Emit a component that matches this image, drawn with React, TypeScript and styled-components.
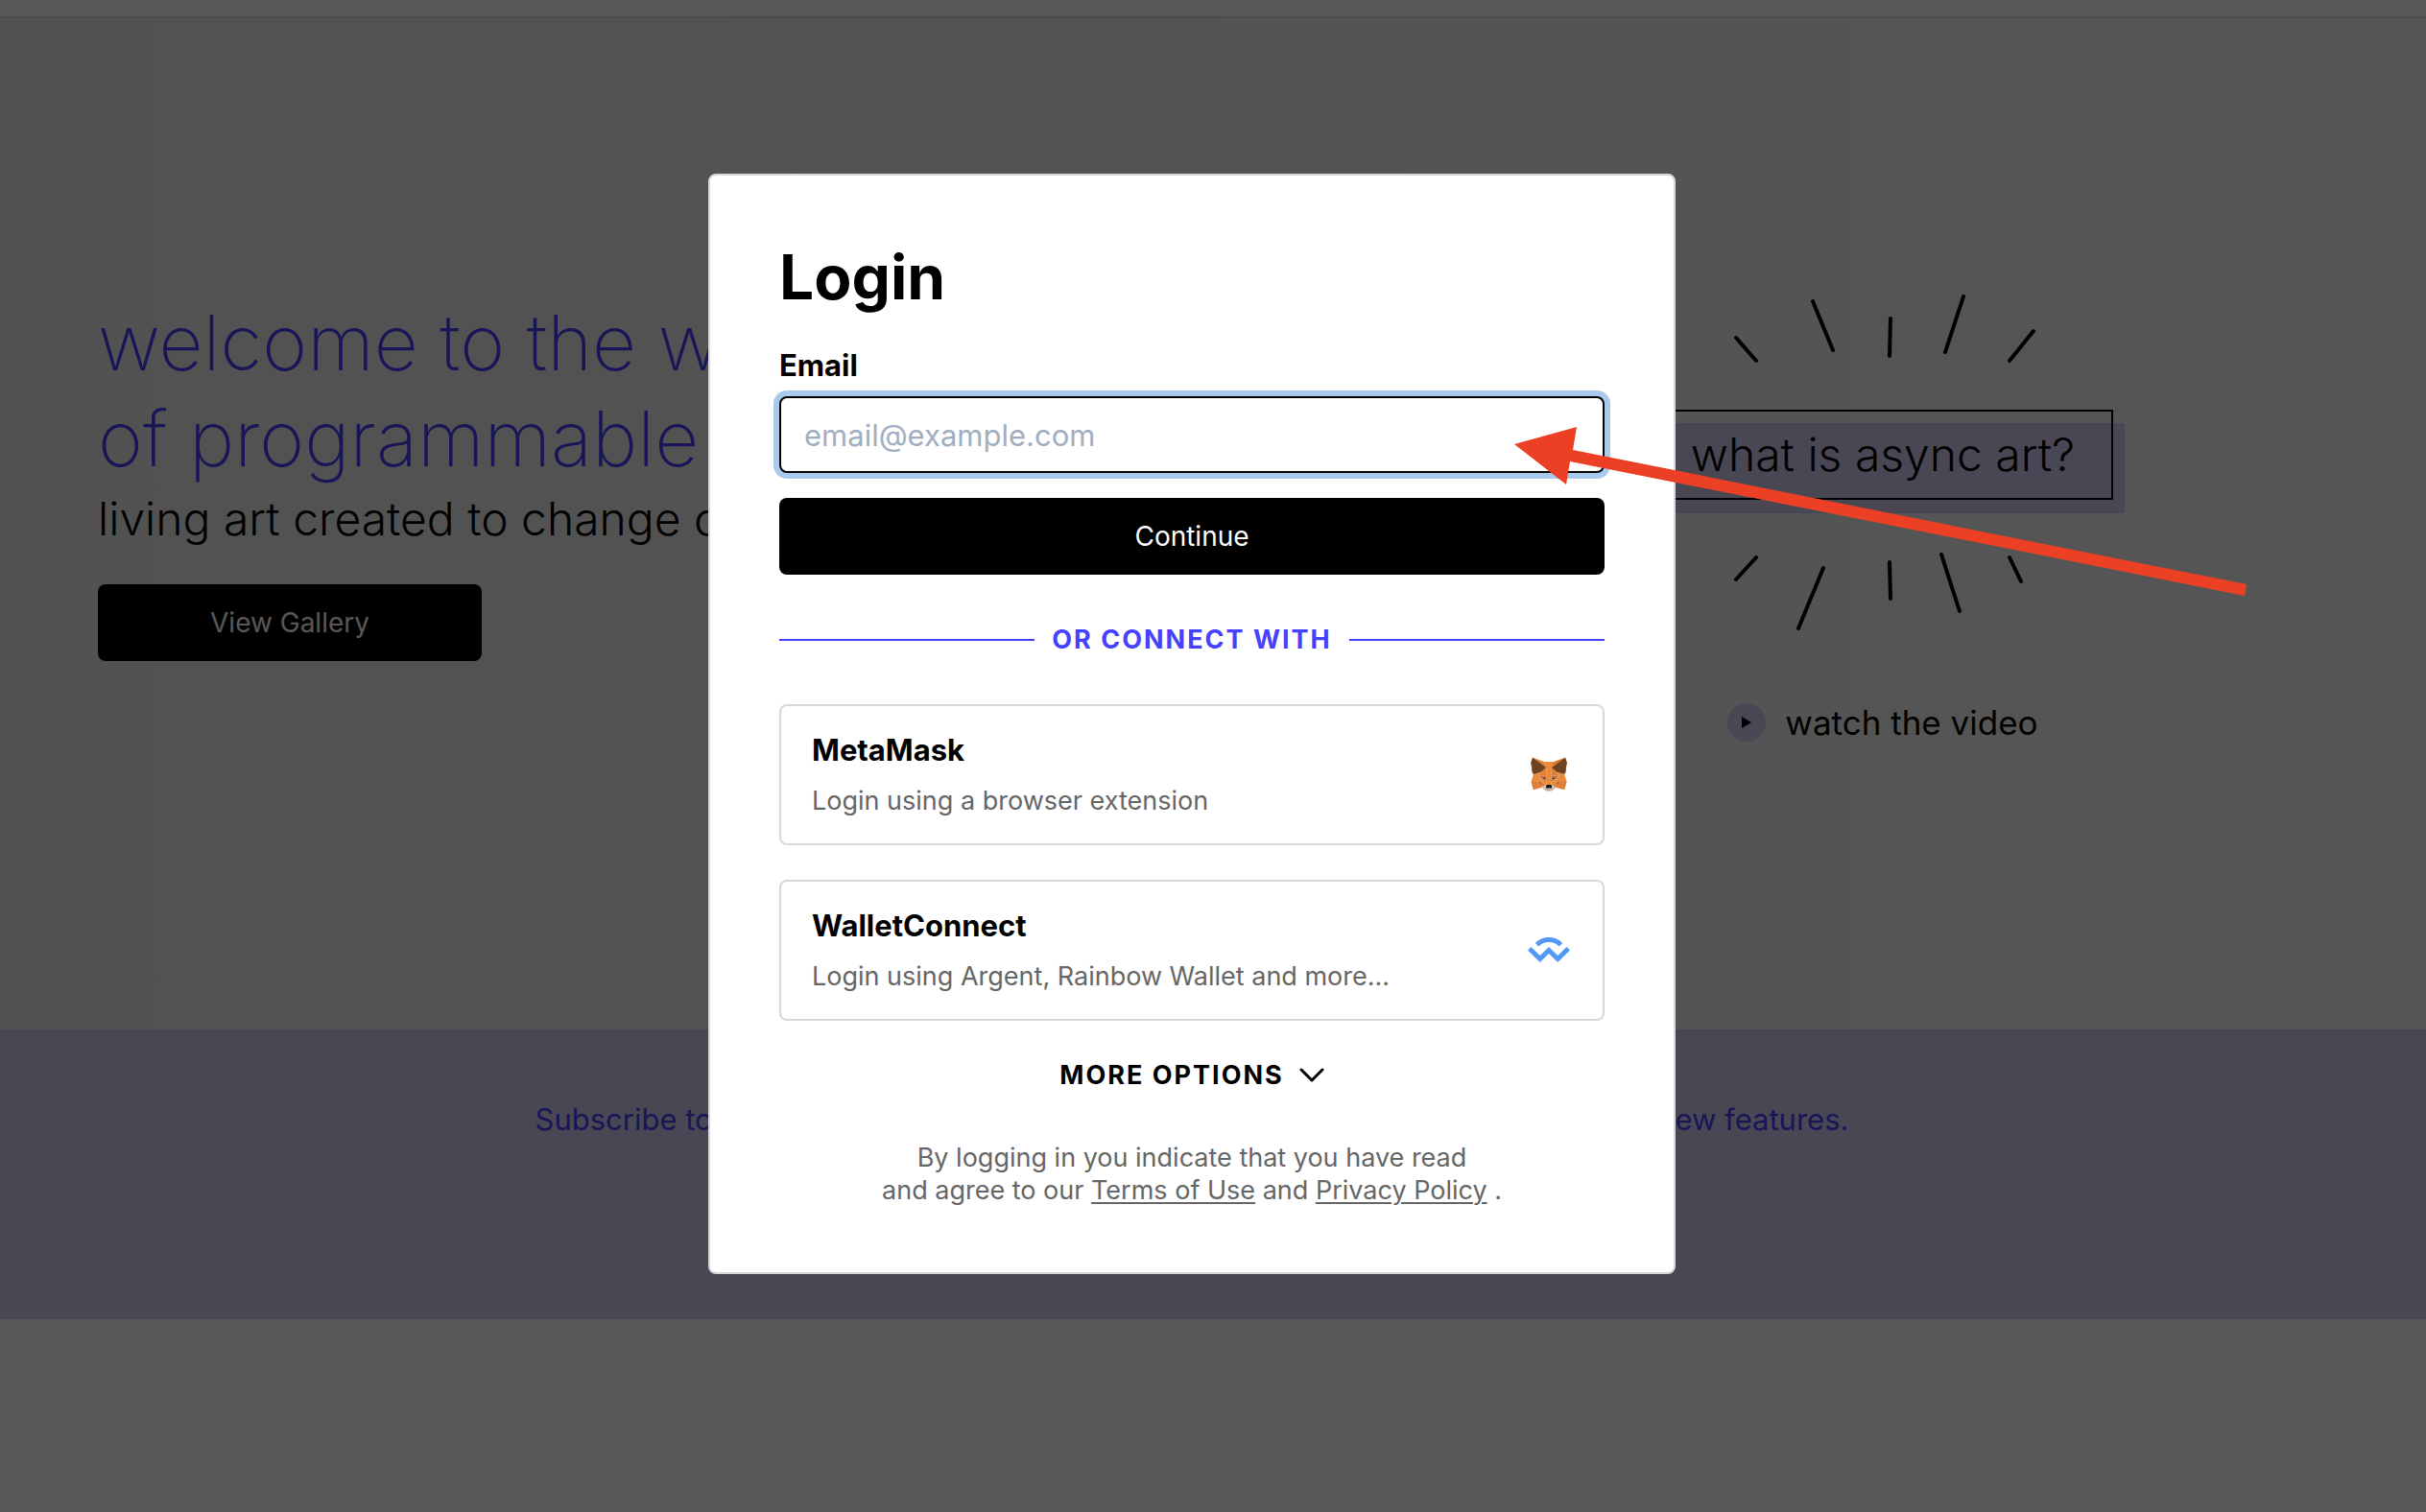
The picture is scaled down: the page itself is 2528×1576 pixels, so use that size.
import React from "react";
import styled, { createGlobalStyle } from "styled-components";

const GlobalStyle = createGlobalStyle`
  *, *::before, *::after { box-sizing: border-box; }
  body {
    margin: 0;
    background: #ffffff;
    color: #000000;
    font-family: Inter, "Liberation Sans", sans-serif;
  }
  h1, h2, p { margin: 0; }
  button, input { font-family: inherit; }
`;

const accent = "#4640ff";
const lavender = "#d4d1f4";
const line = "#d8d8d8";

const Page = styled.div`
  min-height: 100vh;
`;

const Header = styled.header`
  height: 19px;
  border-bottom: 2px solid #dfdfdf;
`;

const Hero = styled.main`
  display: flex;
  justify-content: space-between;
  align-items: flex-start;
  padding: 288px 326px 300px 102px;
  background: linear-gradient(90deg, #eeeeee, #fafafa);
`;

const Intro = styled.div`
  display: flex;
  flex-direction: column;
  align-items: flex-start;
`;

const Headline = styled.h1`
  font-size: 80px;
  line-height: 100px;
  font-weight: 200;
  color: ${accent};
`;

const Tagline = styled.p`
  margin: 4px 0 38px;
  font-size: 48px;
  line-height: 60px;
  font-weight: 300;
`;

const SolidButton = styled.button<{ $width: string }>`
  width: ${(p) => p.$width};
  height: 80px;
  padding: 0;
  border: 0;
  border-radius: 8px;
  background: #000000;
  color: #ffffff;
  font-size: 28px;
  line-height: 34px;
`;

const Promo = styled.div`
  display: flex;
  flex-direction: column;
  align-items: center;
`;

const Rays = styled.svg`
  display: block;
  width: 320px;
  fill: none;
  stroke: #000000;
  stroke-width: 4;
  stroke-linecap: round;
`;

const PromoLink = styled.a`
  margin: 48px 0 54px;
  padding: 17px 38px;
  border: 2px solid #000000;
  font-size: 48px;
  line-height: 56px;
  font-weight: 300;
  color: #000000;
  text-decoration: none;
  white-space: nowrap;
  background: linear-gradient(${lavender}, ${lavender}) 0 12px / 100% 100% no-repeat;
  box-shadow: 12px 14px 0 ${lavender};
`;

const VideoLink = styled.a`
  display: flex;
  align-items: center;
  gap: 20px;
  margin-top: 74px;
  font-size: 35px;
  line-height: 40px;
  color: #000000;
  text-decoration: none;
`;

const PlayBadge = styled.span`
  display: flex;
  align-items: center;
  justify-content: center;
  width: 40px;
  height: 40px;
  border-radius: 50%;
  background: ${lavender};
`;

const Subscribe = styled.section`
  height: 302px;
  padding: 74px 44px 0 0;
  background: ${lavender};
  color: ${accent};
  font-size: 31px;
  line-height: 40px;
  text-align: center;
`;

const Backdrop = styled.div`
  position: fixed;
  inset: 0;
  display: flex;
  align-items: flex-start;
  justify-content: center;
  padding: 181px 44px 0 0;
  background: rgba(0, 0, 0, 0.66);
`;

const Dialog = styled.section`
  position: relative;
  width: 1008px;
  padding: 70px 72px 68px;
  border: 2px solid ${line};
  border-radius: 8px;
  background: #ffffff;
`;

const DialogTitle = styled.h2`
  font-size: 64px;
  line-height: 72px;
  font-weight: 700;
`;

const FieldLabel = styled.label`
  display: block;
  margin: 36px 0 12px;
  font-size: 31px;
  line-height: 40px;
  font-weight: 700;
`;

const EmailInput = styled.input`
  display: block;
  width: 100%;
  height: 80px;
  margin-bottom: 26px;
  padding: 0 24px;
  border: 2px solid #000000;
  border-radius: 8px;
  outline: none;
  box-shadow: 0 0 0 6px #a9caec;
  background: #ffffff;
  font-size: 31px;
  &::placeholder { color: #a0aec0; opacity: 1; }
`;

const Divider = styled.div`
  display: flex;
  align-items: center;
  gap: 18px;
  margin: 52px 0 51px;
  color: ${accent};
  font-size: 27px;
  line-height: 32px;
  font-weight: 700;
  letter-spacing: 2px;
  &::before, &::after {
    content: "";
    flex: 1;
    height: 2px;
    background: ${accent};
  }
`;

const WalletList = styled.div`
  display: flex;
  flex-direction: column;
  gap: 36px;
`;

const WalletCard = styled.button`
  display: flex;
  align-items: center;
  justify-content: space-between;
  width: 100%;
  padding: 26px 34px 27px 32px;
  border: 2px solid ${line};
  border-radius: 8px;
  background: #ffffff;
  color: #000000;
  text-align: left;
`;

const WalletText = styled.span`
  display: flex;
  flex-direction: column;
  gap: 16px;
`;

const WalletName = styled.span`
  font-size: 31px;
  line-height: 40px;
  font-weight: 700;
`;

const WalletHint = styled.span`
  font-size: 27px;
  line-height: 34px;
  color: #666666;
`;

const WalletIcon = styled.span`
  display: flex;
  align-items: center;
  justify-content: center;
  width: 44px;
`;

const MoreButton = styled.button`
  display: flex;
  align-items: center;
  gap: 16px;
  margin: 41px auto 53px;
  padding: 0;
  border: 0;
  background: none;
  color: #000000;
  font-size: 27px;
  line-height: 32px;
  font-weight: 700;
  letter-spacing: 2px;
`;

const Legal = styled.p`
  font-size: 27px;
  line-height: 34px;
  color: #666666;
  text-align: center;
  a { color: inherit; text-decoration-thickness: 2px; text-underline-offset: 3px; }
`;

const Pointer = styled.svg`
  position: absolute;
  left: 838px;
  top: 262px;
  fill: #ec4025;
  pointer-events: none;
`;

function FoxIcon() {
  const shapes: [string, string[]][] = [
    ["#e2761b", ["274.1,35.5 174.6,109.4 193,65.8"]],
    ["#e08036", [
      "44.4,35.5 143.1,110.1 125.6,65.8",
      "238.3,206.8 211.8,247.4 268.5,263 284.8,207.7",
      "33.9,207.7 50.1,263 106.8,247.4 80.3,206.8",
      "103.6,138.2 87.8,162.1 144.1,164.6 142.1,104.1",
      "214.9,138.2 175.9,103.4 174.6,164.6 230.8,162.1",
      "106.8,247.4 140.6,230.9 111.4,208.1",
      "177.9,230.9 211.8,247.4 207.1,208.1",
    ]],
    ["#d7c1b3", [
      "211.8,247.4 177.9,230.9 180.6,253 180.3,262.3",
      "106.8,247.4 138.3,262.3 138.1,253 140.6,230.9",
    ]],
    ["#ca6b2c", [
      "106.8,247.4 111.6,206.8 80.3,207.7",
      "207,206.8 211.8,247.4 238.3,207.7",
      "230.8,162.1 174.6,164.6 179.8,193.5 188.1,176.1 208.1,185.2",
      "110.6,185.2 130.6,176.1 138.8,193.5 144.1,164.6 87.8,162.1",
    ]],
    ["#233447", [
      "138.8,193.5 110.6,185.2 130.5,176.1",
      "179.7,193.5 188,176.1 208,185.2",
    ]],
    ["#e08036", [
      "87.8,162.1 111.4,208.1 110.6,185.2",
      "208.1,185.2 207.1,208.1 230.8,162.1",
      "144.1,164.6 138.8,193.5 145.4,227.6 146.9,182.7",
      "174.6,164.6 171.9,182.6 173.1,227.6 179.8,193.5",
    ]],
    ["#e88a3a", [
      "179.8,193.5 173.1,227.6 177.9,230.9 207.1,208.1 208.1,185.2",
      "110.6,185.2 111.4,208.1 140.6,230.9 145.4,227.6 138.8,193.5",
      "267.2,153.5 214.9,138.2 230.8,162.1 207.1,208.1 238.3,207.7 284.8,207.7",
      "103.6,138.2 51.3,153.5 33.9,207.7 80.3,207.7 111.4,208.1 87.8,162.1",
      "174.6,164.6 177.9,106.9 193.1,65.8 125.6,65.8 140.6,106.9 144.1,164.6 145.3,182.8 145.4,227.6 173.1,227.6 173.3,182.8",
    ]],
    ["#c0ad9e", ["180.3,262.3 180.6,253 178.1,250.8 140.4,250.8 138.1,253 138.3,262.3 106.8,247.4 117.8,256.4 140.1,271.9 178.4,271.9 200.8,256.4 211.8,247.4"]],
    ["#161616", ["177.9,230.9 173.1,227.6 145.4,227.6 140.6,230.9 138.1,253 140.4,250.8 178.1,250.8 180.6,253"]],
    ["#6f4320", [
      "278.3,114.2 286.8,73.4 274.1,35.5 177.9,106.9 214.9,138.2 267.2,153.5 278.8,140 273.8,136.4 281.8,129.1 275.6,124.3 283.6,118.2",
      "31.8,73.4 40.3,114.2 34.9,118.2 42.9,124.3 36.8,129.1 44.8,136.4 39.8,140 51.3,153.5 103.6,138.2 140.6,106.9 44.4,35.5",
    ]],
  ];
  return (
    <svg width="38" height="36" viewBox="31 35 256 237" aria-hidden="true">
      {shapes.map(([fill, list]) =>
        list.map((points) => <polygon key={points} fill={fill} points={points} />)
      )}
    </svg>
  );
}

function BridgeIcon() {
  return (
    <svg width="44" height="28" viewBox="0 0 44 28" fill="none" stroke="#5299f7" strokeWidth="5" aria-hidden="true">
      <path d="M9.6 8.8A17.4 17.4 0 0 1 34.4 8.8" />
      <path d="M1.8 12.8L12.7 23.6L22 14.4L31.3 23.6L42.2 12.8" />
    </svg>
  );
}

function Wallet(props: { name: string; hint: string; icon: React.ReactNode }) {
  return (
    <WalletCard type="button">
      <WalletText>
        <WalletName>{props.name}</WalletName>
        <WalletHint>{props.hint}</WalletHint>
      </WalletText>
      <WalletIcon>{props.icon}</WalletIcon>
    </WalletCard>
  );
}

export default function App() {
  return (
    <Page>
      <GlobalStyle />
      <Header />
      <Hero>
        <Intro>
          <Headline>
            welcome to the world
            <br />
            of programmable art
          </Headline>
          <Tagline>living art created to change over time</Tagline>
          <SolidButton type="button" $width="400px">View Gallery</SolidButton>
        </Intro>
        <Promo>
          <Rays viewBox="0 0 320 72" aria-hidden="true">
            <path d="M7 45L28 69M87 7L108 58M168 25L167 64M244 2L225 60M317 38L292 69" />
          </Rays>
          <PromoLink href="#about">what is async art?</PromoLink>
          <Rays viewBox="0 0 320 84" aria-hidden="true">
            <path d="M28 6L7 29M98 17L72 80M167 11L168 49M221 3L240 62M292 6L304 31" />
          </Rays>
          <VideoLink href="#video">
            <PlayBadge>
              <svg width="10" height="12" viewBox="0 0 10 12" aria-hidden="true">
                <path d="M0 0L10 6L0 12Z" />
              </svg>
            </PlayBadge>
            watch the video
          </VideoLink>
        </Promo>
      </Hero>
      <Subscribe>
        <p>Subscribe to our newsletter for the latest on upcoming drops, new creators and new features.</p>
      </Subscribe>

      <Backdrop>
        <Dialog role="dialog" aria-labelledby="login-title">
          <DialogTitle id="login-title">Login</DialogTitle>
          <FieldLabel htmlFor="email">Email</FieldLabel>
          <EmailInput id="email" type="email" placeholder="email@example.com" />
          <SolidButton type="submit" $width="100%">Continue</SolidButton>
          <Divider>OR CONNECT WITH</Divider>
          <WalletList>
            <Wallet name="MetaMask" hint="Login using a browser extension" icon={<FoxIcon />} />
            <Wallet name="WalletConnect" hint="Login using Argent, Rainbow Wallet and more..." icon={<BridgeIcon />} />
          </WalletList>
          <MoreButton type="button">
            MORE OPTIONS
            <svg width="26" height="16" viewBox="0 0 26 16" fill="none" stroke="#000000" strokeWidth="3" strokeLinecap="round" strokeLinejoin="round" aria-hidden="true">
              <path d="M2 2L13 13L24 2" />
            </svg>
          </MoreButton>
          <Legal>
            By logging in you indicate that you have read
            <br />
            and agree to our <a href="#terms">Terms of Use</a> and <a href="#privacy">Privacy Policy</a> .
          </Legal>
          <Pointer width="764" height="178" viewBox="0 0 764 178" aria-hidden="true">
            <path d="M0 18L65 0L61 24L763 164L761 176L58 36L54 60Z" />
          </Pointer>
        </Dialog>
      </Backdrop>
    </Page>
  );
}
